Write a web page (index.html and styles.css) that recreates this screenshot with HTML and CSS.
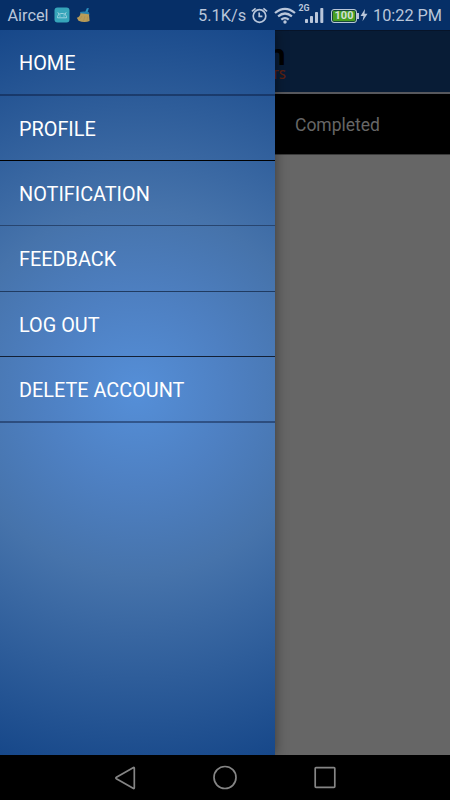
FILE: index.html
```html
<!DOCTYPE html>
<html lang="en">
<head>
<meta charset="utf-8">
<title>Menu</title>
<link rel="stylesheet" href="styles.css">
</head>
<body>
<div class="phone">
  <header class="status">
    <span class="carrier">Aircel</span>
    <svg class="app-icon" width="16" height="16" viewBox="0 0 16 16"><rect x=".5" y=".5" width="15" height="15" rx="3" fill="#36a5ba"/><path d="M3.5 10.8V9.5Q4 6.4 8 6.4t4.5 3.1v1.3ZM5 7.2 3.8 5.3M11 7.2l1.2-1.9" fill="none" stroke="#a5d7e2" stroke-width=".9"/><path d="M5.5 9h1M9.5 9h1" stroke="#b2dce5"/></svg>
    <svg class="broom-icon" width="16" height="16" viewBox="0 0 16 16"><path d="m9 5.5 1.8-4.2 2-.3-1.3 4.6Z" fill="#2c91c1"/><path d="M4 5q4-1.2 9 .3l.5 2.4-8.8-.6Z" fill="#247fae"/><path d="M4.5 6.3 13 7.3l.6 6.7Q8 16 2.5 13.7L.8 10.8Q4 10 4.5 6.3Z" fill="#b99c58"/><path d="m6 9-2 3M9 9l-1.5 5M11.5 9.5l-.5 5" stroke="#a18b51" stroke-width=".5"/></svg>
    <span class="speed">5.1K/s</span>
    <svg class="alarm" width="17" height="17" viewBox="0 0 17 17" fill="none" stroke="#b9c6da" stroke-width="1.7"><circle cx="8.5" cy="9" r="6.3"/><path d="M8.2 5.5V9.4h3.2M.9 4.4l3.7-3M16.1 4.4l-3.7-3"/></svg>
    <svg class="wifi" width="22" height="17" viewBox="0 0 22 17" fill="none" stroke="#b9c6da" stroke-width="2.2"><path d="M1 6q10-8.4 20 0M4.1 9.4q6.9-5.8 13.8 0M7.3 12.6q3.7-3.1 7.4 0"/><circle cx="11" cy="15" r="1.7" fill="#b9c6da" stroke="none"/></svg>
    <span class="network">2G</span>
    <svg class="signal" width="19" height="16" viewBox="0 0 19 16" fill="#b9c6da"><rect x="0" y="12" width="3" height="4" rx=".8"/><rect x="5" y="9" width="3" height="7" rx=".8"/><rect x="10" y="5" width="3" height="11" rx=".8"/><rect x="15.3" y="1" width="3" height="15" rx=".8"/></svg>
    <span class="battery">100</span>
    <svg class="bolt" width="8" height="14" viewBox="0 0 8 14"><path d="M5 1 .5 8h3L2.5 13.3 7.5 5.7h-3Z" fill="#b9c6da"/></svg>
    <span class="clock">10:22 PM</span>
  </header>
  <main class="screen">
    <div class="toolbar"><div class="logo"><b>n</b><span>TS</span></div></div>
    <div class="tabs"><span>Completed</span></div>
    <div class="content"></div>
    <nav class="drawer">
      <a class="soft">HOME</a>
      <a>PROFILE</a>
      <a class="shade">NOTIFICATION</a>
      <a class="mid">FEEDBACK</a>
      <a class="dark">LOG OUT</a>
      <a class="soft">DELETE ACCOUNT</a>
    </nav>
  </main>
  <footer class="keys">
    <svg width="24" height="26" viewBox="0 0 24 26"><path d="M21.3 3.3v19.4q0 1.3-1.2.6L3.4 13.7q-1.1-.7 0-1.4L20.1 2.7q1.2-.7 1.2.6Z"/></svg>
    <svg width="24" height="26" viewBox="0 0 24 26"><circle cx="12" cy="12.5" r="11"/></svg>
    <svg width="24" height="26" viewBox="0 0 24 26"><rect x="2.2" y="2.7" width="19.6" height="19.6" rx=".8"/></svg>
  </footer>
</div>
</body>
</html>
```
FILE: styles.css
```css
* { box-sizing: border-box; }
body { margin: 0; background: #000; font-family: Roboto, sans-serif; }
.phone { width: 450px; height: 800px; display: flex; flex-direction: column; overflow: hidden; }
.status { height: 30px; flex: none; display: flex; align-items: center; padding-left: 7.5px; background: #062f67; color: #b9c6da; font-size: 16.6px; white-space: nowrap; line-height: 30px; }
.status svg { flex: none; }
.carrier { width: 46.5px; padding-top: 1px; font-size: 16.3px; }
.broom-icon { margin-left: 6px; }
.speed { margin-left: 106px; width: 52px; padding-top: 1px; font-size: 16.4px; }
.alarm { margin-left: 1px; }
.wifi { margin-left: 5.5px; }
.network { width: 12px; height: 10px; margin: -14px 0 0 3px; font-size: 8.8px; font-weight: 700; line-height: 10px; }
.signal { margin-left: -5.5px; }
.battery { position: relative; width: 26px; height: 14px; margin: 1px 0 0 7px; border: 1px solid #b9c6da; border-radius: 3px; box-shadow: inset 0 0 0 1px #17483a; background: #479f22; color: #d1dfd4; font-size: 11px; font-weight: 700; line-height: 12px; text-align: center; }
.battery::after { content: ""; position: absolute; left: 25px; top: 3px; width: 2px; height: 6px; background: #b9c6da; }
.bolt { margin-left: 3px; }
.clock { margin-left: 5px; padding-top: 1px; font-size: 16.3px; }
.screen { height: 725px; flex: none; position: relative; display: flex; flex-direction: column; overflow: hidden; }
.toolbar { height: 64px; padding: 12px 0 0 260px; background: #081c36; border-top: 1px solid #071429; border-bottom: 2px solid #57585d; }
.logo { width: 26px; display: flex; flex-direction: column; align-items: flex-end; font-family: "Open Sans", sans-serif; }
.logo b { height: 22px; color: #000; font-size: 29px; line-height: 22px; }
.logo span { color: #5b2011; font-size: 13px; font-weight: 600; line-height: 18px; }
.tabs { height: 61px; padding: 2px 0 0 295px; display: flex; align-items: center; background: #000; border-bottom: 1px solid #3b3b3b; color: #666; font-size: 17.5px; }
.content { flex: 1; background: #666; }
.drawer { position: absolute; left: 0; top: 0; width: 275px; height: 725px; background: radial-gradient(circle 390px at 137px 362px, #558fd8 0, #4e80c2 24%, #4673ab 47%, #164789 100%); box-shadow: 0 0 12px rgba(0,0,0,.45); }
.drawer a { height: 65px; padding: 2px 0 0 19px; display: flex; align-items: center; color: #fff; font-size: 19.85px; border-bottom: 1px solid #000; }
.drawer .soft { height: 66px; border-bottom: 2px solid rgba(9,22,55,.45); }
.drawer .shade { border-bottom-color: #28456f; }
.drawer .mid { height: 66px; border-bottom-color: #203b61; }
.drawer .dark { border-bottom-color: #132035; }
.keys { height: 45px; flex: none; display: flex; justify-content: center; align-items: center; gap: 76px; background: #000; }
.keys svg { fill: none; stroke: #858585; stroke-width: 1.7; }
```
